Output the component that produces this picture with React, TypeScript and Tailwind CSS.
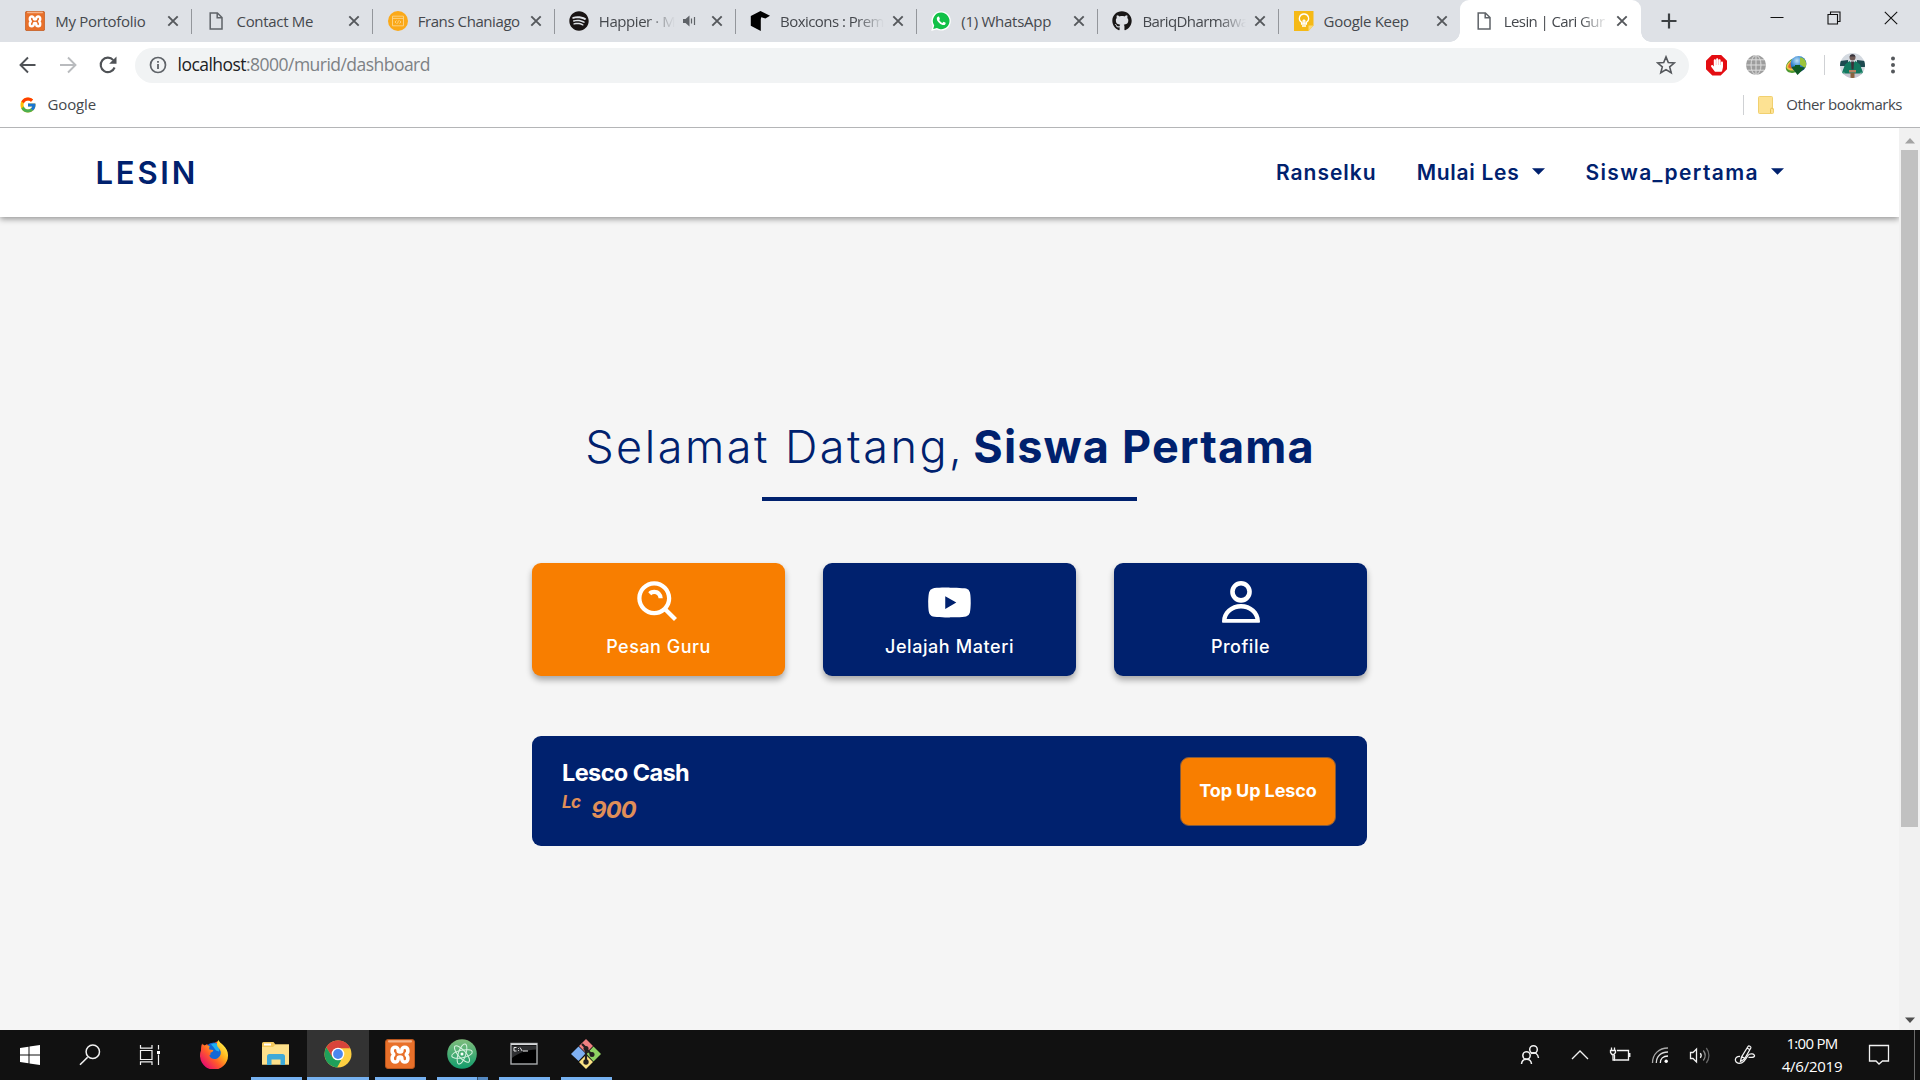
import type { ReactNode } from "react";
import { BiLogoYoutube, BiSearchAlt } from "react-icons/bi";
import { FaGithub, FaSpotify, FaHandPaper } from "react-icons/fa";
import { FcGoogle } from "react-icons/fc";

/* ---------- Brand and favicon drawings ---------- */

function XamppIcon({ className }: { className: string }) {
  return (
    <svg viewBox="0 0 30 30" className={className}>
      <rect x="0.5" y="0.5" width="29" height="29" rx="2.5" fill="#e8702a" stroke="#b9551c" />
      <rect x="3" y="1.2" width="24" height="2.2" rx="1" fill="#f7b48a" />
      <path
        d="M10.2 8.2a3 3 0 0 0-3 3v1.6c0 1.4 1.5 1.6 1.5 2.7S7.2 16.8 7.2 18.600v1.400a3 3 0 0 0 6 0v-.8c0-1.600 3.600-1.600 3.600 0v.8a3 3 0 0 0 6 0v-1.400c0-1.800-1.500-2-1.500-3.100s1.500-1.300 1.500-2.700v-1.600a3 3 0 0 0-6 0v.6c0 1.600-3.600 1.600-3.600 0v-.6a3 3 0 0 0-3-3z"
        fill="none"
        stroke="#fff"
        strokeWidth="3.6"
      />
    </svg>
  );
}

function FileIcon() {
  return (
    <svg viewBox="0 0 20 20" className="size-5">
      <path d="M4.200 1.900h7.200l4.600 4.600v11.600H4.200z M11.200 2v4.700H16" fill="none" stroke="#5f6368" strokeWidth="1.5" />
    </svg>
  );
}

function CodeIcon() {
  return (
    <svg viewBox="0 0 20 20" className="size-5">
      <circle cx="10" cy="10" r="10" fill="#fba919" />
      <path d="M4.500 5.200h11v9.600h-11z M4.500 7.400h11 M8.500 9.500L7 11l1.500 1.500 M11.500 9.500L13 11l-1.500 1.500 M10.500 9.500l-1 3" fill="none" stroke="#fdd58a" strokeWidth="0.9" />
    </svg>
  );
}

function BoxiconsIcon() {
  return (
    <svg viewBox="0 0 20 20" className="size-5">
      <path d="M10.500 0L20 4.800l-4.600 2.600-4.200-1.200-.4 2.300V20L.8 14.800V5z" fill="#000" />
    </svg>
  );
}

function WhatsappIcon() {
  return (
    <svg viewBox="0 0 20 20" className="size-5">
      <path d="M10.200.2a9.700 9.700 0 1 1-4.600 18.300L.2 19.900l1.500-5.200A9.700 9.700 0 0 1 10.200.2z" fill="#fff" />
      <path d="M10.200 1.600a8.300 8.300 0 1 1-4.300 15.400l-3.700 1 1-3.600a8.300 8.300 0 0 1 7-12.800z" fill="#12c148" />
      <path d="M7.500 5.600c.3 0 .5.100.7.500l.7 1.700c.1.300-.5 1-.7 1.200.8 1.500 1.900 2.300 3.200 2.900.3-.1.900-1.100 1.200-1.100l2 1c.2.200-.1 1.500-.7 1.900-2.200 1.500-8-2.400-8.100-6 0-1.100.8-2.100 1.700-2.100z" fill="#fff" />
    </svg>
  );
}

function KeepIcon() {
  return (
    <svg viewBox="0 0 20 20" className="size-5">
      <path d="M0 0h19.500v14.500L14.500 20H0z" fill="#f5b916" />
      <path d="M14.500 20v-5.500h5z" fill="#fbd975" />
      <path d="M10 3a4.400 4.400 0 0 0-2.400 8.200v2h4.800v-2A4.400 4.400 0 0 0 10 3z M8 15h4 M9.200 13V9.500L10 9l.8.500V13" fill="none" stroke="#fff" strokeWidth="1.300" />
    </svg>
  );
}

function CloseIcon() {
  return (
    <svg viewBox="0 0 12 12" className="size-3">
      <path d="M1.300 1.300l9.400 9.400M10.700 1.300l-9.400 9.400" stroke="#55585c" strokeWidth="1.9" />
    </svg>
  );
}

/* ---------- Browser tabs ---------- */

type Tab = { icon: ReactNode; label: string; spacing: string; fade?: boolean; audio?: boolean };

const tabs: Tab[] = [
  { icon: <XamppIcon className="size-5" />, label: "My Portofolio", spacing: "tracking-[-0.3px]" },
  { icon: <FileIcon />, label: "Contact Me", spacing: "tracking-[-0.3px]" },
  { icon: <CodeIcon />, label: "Frans Chaniago", spacing: "tracking-[-0.42px]" },
  { icon: <FaSpotify className="size-5 text-[#191414]" />, label: "Happier · M", spacing: "tracking-[-0.45px]", fade: true, audio: true },
  { icon: <BoxiconsIcon />, label: "Boxicons : Prem", spacing: "tracking-[-0.55px]", fade: true },
  { icon: <WhatsappIcon />, label: "(1) WhatsApp", spacing: "tracking-[-0.27px]" },
  { icon: <FaGithub className="size-5 text-[#191717]" />, label: "BariqDharmawa", spacing: "tracking-[-0.6px]", fade: true },
  { icon: <KeepIcon />, label: "Google Keep", spacing: "tracking-[-0.3px]" },
];

function TabBody({ tab }: { tab: Tab }) {
  return (
    <div className="flex h-full items-center pl-[14.3px]">
      <span className="flex w-5 shrink-0 justify-center">{tab.icon}</span>
      <span
        className={`-mt-px ml-2.5 shrink-0 overflow-hidden text-[15px] leading-6 whitespace-nowrap text-[#45484d] ${tab.spacing} ${
          tab.audio ? "w-[76px]" : "w-[104px]"
        } ${tab.fade ? "[mask-image:linear-gradient(to_right,black_calc(100%-28px),transparent)]" : ""}`}
      >
        {tab.label}
      </span>
      {tab.audio && (
        <svg viewBox="0 0 14 14" className="ml-2 h-3.5 w-3.5 shrink-0">
          <path d="M0 5h2.500L6.500 1.500v11L2.500 9H0z" fill="#5f6368" />
          <path d="M8.500 4.500v5M11.500 3v8" stroke="#5f6368" strokeWidth="1.2" />
        </svg>
      )}
      <span className={`flex shrink-0 ${tab.audio ? "ml-[14px]" : "ml-[8px]"}`}>
        <CloseIcon />
      </span>
    </div>
  );
}

function TabStrip() {
  return (
    <div className="flex h-[42px] bg-[#dee1e6] pl-[11px]">
      {tabs.map((tab, i) => (
        <div key={tab.label} className="flex w-[181.2px] shrink-0 items-center">
          <div className="h-full flex-1">
            <TabBody tab={tab} />
          </div>
          {i < 7 && <div className="h-[25px] w-px bg-[#93969b]" />}
        </div>
      ))}
      <div className="relative -ml-[1px] w-[181px] shrink-0 rounded-t-[9px] bg-white">
        <div className="absolute bottom-0 -left-2.5 size-2.5 bg-[radial-gradient(circle_at_top_left,#dee1e6_9.5px,white_10px)]" />
        <div className="absolute -right-2.5 bottom-0 size-2.5 bg-[radial-gradient(circle_at_top_right,#dee1e6_9.5px,white_10px)]" />
        <TabBody tab={{ icon: <FileIcon />, label: "Lesin | Cari Gur", spacing: "tracking-[-0.6px]", fade: true }} />
      </div>
      <svg viewBox="0 0 16 16" className="mt-[13px] ml-5 size-4 shrink-0">
        <path d="M8 .5v15M.5 8h15" stroke="#3c4043" strokeWidth="2.2" />
      </svg>
      <div className="mt-[11px] ml-auto flex gap-[43px] pr-[22px]">
        <svg viewBox="0 0 14 14" className="size-3.5">
          <path d="M.5 6.500h13" stroke="#111" strokeWidth="1" />
        </svg>
        <svg viewBox="0 0 14 14" className="size-3.5">
          <path d="M1 3.500h9.500V13H1z M3.500 3.500V1H13v9.500h-2.500" fill="none" stroke="#111" strokeWidth="1.100" />
        </svg>
        <svg viewBox="0 0 14 14" className="size-3.5">
          <path d="M.8.8l12.400 12.400M13.200.8L.8 13.200" stroke="#111" strokeWidth="1.100" />
        </svg>
      </div>
    </div>
  );
}

/* ---------- Toolbar ---------- */

function Toolbar() {
  return (
    <div className="flex h-[46px] items-center bg-white">
      <div className="flex w-[135px] shrink-0 items-center pl-[18px]">
        <svg viewBox="0 0 20 20" className="size-5">
          <path d="M17.500 10H3M10 2.500L2.500 10l7.500 7.500" fill="none" stroke="#4f5256" strokeWidth="1.900" />
        </svg>
        <svg viewBox="0 0 20 20" className="ml-5 size-5">
          <path d="M2 10h15M10 2.500l7.500 7.500-7.500 7.500" fill="none" stroke="#b9bbbe" strokeWidth="1.900" />
        </svg>
        <svg viewBox="0 0 20 20" className="ml-5 size-5">
          <path d="M16.600 12.500a7.200 7.200 0 1 1-1.300-7.400" fill="none" stroke="#4f5256" strokeWidth="2.100" />
          <path d="M18.500 1.500v7.300h-7.300z" fill="#4f5256" />
        </svg>
      </div>
      <div className="flex h-[35px] w-[1554px] shrink-0 items-center rounded-full bg-[#f1f3f4] pr-[13px] pl-[13.500px]">
        <svg viewBox="0 0 18 18" className="h-[18px] w-[18px]">
          <circle cx="9" cy="9" r="7.500" fill="none" stroke="#5f6368" strokeWidth="1.700" />
          <path d="M9 8v5M9 5v1.800" stroke="#5f6368" strokeWidth="1.800" />
        </svg>
        <span className="-mt-0.5 ml-[11px] text-[17.5px] tracking-[-0.53px] text-[#7d8185]">
          <span className="text-[#202124]">localhost</span>:8000/murid/dashboard
        </span>
        <svg viewBox="0 0 20 20" className="ml-auto size-5">
          <path d="M10 1.900l2.300 5.600 6 .5-4.600 3.900 1.500 5.900L10 14.600l-5.200 3.200 1.500-5.900L1.700 8l6-.5z" fill="none" stroke="#55585c" strokeWidth="1.600" />
        </svg>
      </div>
      <div className="ml-[17px] flex items-center">
        <div className="flex size-[21px] items-center justify-center bg-[#e40d12] text-white [clip-path:polygon(30%_0,70%_0,100%_30%,100%_70%,70%_100%,30%_100%,0_70%,0_30%)]">
          <FaHandPaper className="h-[14px] w-[12px]" />
        </div>
        <svg viewBox="0 0 20 20" className="ml-[19px] size-5">
          <circle cx="10" cy="10" r="10" fill="#9d9d9d" />
          <path d="M10 0v20M0 10h20M2 4.800h16M2 15.200h16" stroke="#dcdcdc" strokeWidth="1" />
          <ellipse cx="10" cy="10" rx="5" ry="9.600" fill="none" stroke="#dcdcdc" />
        </svg>
        <svg viewBox="0 0 22 20" className="ml-[19px] h-5 w-[22px]">
          <defs>
            <radialGradient id="orb" cx="0.4" cy="0.3" r="0.8">
              <stop offset="0" stopColor="#bfe2f8" />
              <stop offset="0.5" stopColor="#2e82cf" />
              <stop offset="1" stopColor="#10417f" />
            </radialGradient>
          </defs>
          <path d="M7 4C1 7-1 14 2.500 16.500S11 18 13 15z" fill="#4f9a30" />
          <path d="M7 5C2 8 0 12 2.500 14S9 16 12 14z" fill="#f0c545" />
          <path d="M7.500 6C4 8 2 12 4 13s5 1 7 0z" fill="#e0682f" />
          <circle cx="13.500" cy="8.800" r="7.900" fill="url(#orb)" />
          <path d="M15 2.500c3 0 5.500 2 6 5s0 4-1 5.500l-5-3.500z" fill="#9cc43c" />
          <path d="M6.500 12l3.500-.8V10h5l.3 2 4.700.5-7.500 7.500z" fill="#0f5a24" />
        </svg>
        <div className="ml-[17px] h-5 w-px bg-[#cfd1d4]" />
        <svg viewBox="0 0 25 25" className="ml-[15px] size-[25px]">
          <clipPath id="avatar">
            <circle cx="12.500" cy="12.500" r="12.500" />
          </clipPath>
          <g clipPath="url(#avatar)">
            <rect width="25" height="25" fill="#d3d9e0" />
            <path d="M0 8l8-1v6H0zM17 7l8 1v6h-8z" fill="#1d4a50" />
            <path d="M9.500 8l3 3 3-3 4.500 3.500L23.500 21h-22L5 11.500z" fill="#12785f" />
            <path d="M4 18.500L1.500 21h4zM21 18.500l2.500 2.500h-4z" fill="#4aa28a" />
            <circle cx="12.500" cy="4.600" r="3" fill="#6e5a55" />
            <path d="M9.500 3.500a3.100 3.100 0 0 1 6 0z" fill="#35333c" />
            <path d="M11 8.500h3l-.5 8h-2z" fill="#3b3038" />
            <path d="M9 17h7v2.500H9z" fill="#b98263" />
            <path d="M0 20.500h25V25H0z" fill="#c7c4cf" />
            <path d="M10.500 20h4v5h-4z" fill="#8a623f" />
          </g>
        </svg>
        <svg viewBox="0 0 6 20" className="ml-[24.500px] h-5 w-1.5">
          <circle cx="3" cy="3.500" r="2" fill="#55585c" />
          <circle cx="3" cy="10" r="2" fill="#55585c" />
          <circle cx="3" cy="16.500" r="2" fill="#55585c" />
        </svg>
      </div>
    </div>
  );
}

function BookmarksBar() {
  return (
    <div className="flex h-10 items-center border-b border-[#b4b5b7] bg-white pr-[18px] pb-[6px] pl-[19px] text-[15px] text-[#45484d]">
      <FcGoogle className="h-[18px] w-[18px]" />
      <span className="ml-[10.5px] tracking-[-0.15px]">Google</span>
      <div className="ml-auto h-5 w-px bg-[#cfd1d4]" />
      <svg viewBox="0 0 16 18" className="ml-[14px] h-[18px] w-4">
        <path d="M.5 1.500A1 1 0 0 1 1.500.500h12a1 1 0 0 1 1 1V12l1 1v3.500a1 1 0 0 1-1 1h-13a1 1 0 0 1-1-1z" fill="#fde293" stroke="#f1d06f" />
        <path d="M12.500 17v-3.500a1.300 1.300 0 0 1 2.600 0" fill="none" stroke="#e8c255" />
      </svg>
      <span className="ml-3 tracking-[-0.5px]">Other bookmarks</span>
    </div>
  );
}

/* ---------- Web page ---------- */

function Caret() {
  return (
    <svg viewBox="0 0 13 7" className="-mt-0.5 h-[7px] w-[13px]">
      <path d="M0 .3h13L6.500 6.800z" fill="#00216e" />
    </svg>
  );
}

function Navbar() {
  return (
    <nav className="relative flex h-[89px] items-center bg-white pr-[115px] pl-[95.5px] font-['Inter',sans-serif] text-[21px] leading-none font-semibold text-[#00216e] shadow-[0_2px_6px_rgba(0,0,0,0.4)]">
      <span className="text-[31px] tracking-[2.8px]">LESIN</span>
      <span className="ml-auto tracking-[1px]">Ranselku</span>
      <span className="ml-[40px] tracking-[0.7px]">Mulai Les</span>
      <span className="ml-[13px] flex">
        <Caret />
      </span>
      <span className="ml-[40px] tracking-[1.38px]">Siswa_pertama</span>
      <span className="ml-[12px] flex">
        <Caret />
      </span>
    </nav>
  );
}

function UserIcon() {
  return (
    <svg viewBox="0 0 24 24" className="size-[50px]" fill="#fff" fillRule="evenodd">
      <path d="M12 1.900a5.200 5.200 0 1 0 0 10.400 5.200 5.200 0 0 0 0-10.400zm0 2.200a3 3 0 1 1 0 6 3 3 0 0 1 0-6z" />
      <path d="M12 13c-5 0-9.100 3.700-9.100 8.200v.3c0 .3.200.5.500.5h17.200c.3 0 .5-.2.500-.5v-.3c0-4.500-4.100-8.200-9.100-8.200zm0 2.100c3.500 0 6.300 2.200 6.900 5H5.100c.6-2.800 3.400-5 6.900-5z" />
    </svg>
  );
}

function ActionCard({ color, icon, label, spacing }: { color: string; icon: ReactNode; label: string; spacing: string }) {
  return (
    <div className={`flex h-[113px] flex-col items-center rounded-[9px] pt-[14px] text-white shadow-[0_4px_6px_rgba(0,0,0,0.32)] ${color}`}>
      {icon}
      <span className={`mt-2 text-[18px] leading-6 font-medium ${spacing}`}>{label}</span>
    </div>
  );
}

function Dashboard() {
  return (
    <main className="flex flex-1 flex-col items-center bg-[#f5f5f5] pt-[204px] font-['Inter',sans-serif]">
      <h1 className="flex h-[50px] items-center gap-[9px] text-[45px] leading-none whitespace-nowrap text-[#00216e]">
        <span className="font-[360] tracking-[2.5px]">Selamat Datang,</span>
        <span className="-mr-px font-bold tracking-[1.15px]">Siswa Pertama</span>
      </h1>
      <div className="mt-[26px] h-1 w-[375px] bg-[#00216e]" />
      <div className="mt-[62px] grid w-[835px] grid-cols-3 gap-[38px]">
        <ActionCard color="bg-[#f87e00]" icon={<BiSearchAlt className="-ml-px size-[51px] -mb-px" />} label="Pesan Guru" spacing="tracking-[0.5px]" />
        <ActionCard color="bg-[#00216e]" icon={<BiLogoYoutube className="size-[51px] -mb-px" />} label="Jelajah Materi" spacing="tracking-[0.58px]" />
        <ActionCard color="bg-[#00216e]" icon={<UserIcon />} label="Profile" spacing="tracking-[0.5px]" />
      </div>
      <section className="mt-[60px] flex h-[110px] w-[835px] items-center justify-between rounded-[9px] bg-[#00216e] pr-[31px] pl-[30px] font-bold">
        <div>
          <div className="text-[23.5px] leading-[30px] tracking-[-0.6px] text-white">Lesco Cash</div>
          <div className="mt-[7px] flex text-[#e08f58] italic">
            <span className="text-[17px] leading-[14px] tracking-[-0.7px]">Lc</span>
            <span className="ml-[11px] text-[23.5px] leading-[30px] tracking-[-0.8px]">900</span>
          </div>
        </div>
        <button className="h-[69px] w-[156px] rounded-[9px] border border-[#7f5a42] bg-[#f87e00] pb-px text-[18px] tracking-[-0.1px] whitespace-nowrap text-white">
          Top Up Lesco
        </button>
      </section>
    </main>
  );
}

function Scrollbar() {
  return (
    <div className="flex w-[21px] shrink-0 flex-col items-center bg-[#f1f1f1]">
      <div className="flex h-[22px] items-center">
        <svg viewBox="0 0 10 6" className="mb-[-3px] h-1.5 w-2.5">
          <path d="M5 0l5 5.500H0z" fill="#a3a3a3" />
        </svg>
      </div>
      <div className="h-[677px] w-[17px] bg-[#c1c1c1]" />
      <svg viewBox="0 0 10 6" className="mt-auto mb-[7px] h-1.5 w-2.5">
        <path d="M0 .5h10L5 6z" fill="#505050" />
      </svg>
    </div>
  );
}

/* ---------- Taskbar ---------- */

function FirefoxIcon() {
  return (
    <svg viewBox="0 0 30 30" className="size-[30px]">
      <defs>
        <linearGradient id="fox" x1="0.9" y1="0.1" x2="0.15" y2="0.85">
          <stop offset="0" stopColor="#fff44f" />
          <stop offset="0.35" stopColor="#ffb11b" />
          <stop offset="0.65" stopColor="#ff5a2b" />
          <stop offset="1" stopColor="#e8116b" />
        </linearGradient>
      </defs>
      <path d="M2.500 5.500c.8.200 1.500 1 2 2 1-1 2-1.800 3.500-2.500l2 2 8-4.500c3 .5 6 3 7.500 6.500l1 8-3 7-9 3.500-9-3-4-7z" fill="#ff4b37" />
      <circle cx="15" cy="13.500" r="10" fill="#1368d6" />
      <path d="M12 5.500c4-2.500 8-1 9 2l-1 5-3-1-3-4z" fill="#22b2f0" />
      <path d="M19.500 1c1 2.500 2.500 3 4.500 5 3.500 3.500 5 6.500 5 10A14 14 0 1 1 2 11.500C2.300 8.500 3 7 3.500 4.500c.7 1.200 1.300 1.700 2.300 2C8 6 9.500 6.500 10.800 7.700 10 8.500 9.800 9.500 10.500 10.500l3.500.5c.8.700-.5 2-2.500 2.700-.3 1.500.5 2.500-1.300 2.800 1.500 3.500 5 4.300 8 3 3-1.500 4.200-4.700 3.300-7.500-.6-2-2-3-3-4.500-1-2-.7-4.500 1-6.500z" fill="url(#fox)" />
    </svg>
  );
}

function ExplorerIcon() {
  return (
    <svg viewBox="0 0 30 30" className="size-[30px]">
      <path d="M1 4.500a1.500 1.500 0 0 1 1.500-1.500h10l2 2.500h13.500v20H1z" fill="#f4c95d" />
      <path d="M3 4.500h7v2H3z" fill="#fff" />
      <path d="M1 8h11l2.500-2.500H28V25.500H1z" fill="#fde08b" />
      <path d="M6 26V17.500A2.500 2.500 0 0 1 8.500 15h13a2.500 2.500 0 0 1 2.500 2.500V26h-4.500v-5.500h-9V26z" fill="#3ea9d8" />
    </svg>
  );
}

function ChromeIcon() {
  return (
    <svg viewBox="0 0 30 30" className="size-[30px]">
      <circle cx="15" cy="15" r="13.500" fill="#fdcf41" />
      <path d="M3.300 8.300A13.500 13.500 0 0 1 27.200 9.200H15L9 18z" fill="#d8443a" />
      <path d="M3.300 8.300L9.600 18.500l8.500 2.800-4 7.200A13.500 13.500 0 0 1 3.300 8.300z" fill="#1fa05b" />
      <circle cx="15" cy="15" r="6.300" fill="#fff" />
      <circle cx="15" cy="15" r="4.900" fill="#4a87ee" />
    </svg>
  );
}

function AtomIcon() {
  return (
    <svg viewBox="0 0 30 30" className="size-[30px]">
      <defs>
        <linearGradient id="atom" x1="0" y1="0" x2="0" y2="1">
          <stop offset="0" stopColor="#80bd7c" />
          <stop offset="1" stopColor="#129c6c" />
        </linearGradient>
      </defs>
      <circle cx="15" cy="15" r="14.800" fill="url(#atom)" />
      <g fill="none" stroke="#d5f1df" strokeWidth="1">
        <ellipse cx="15" cy="15" rx="10.500" ry="3.800" transform="rotate(-12 15 15)" />
        <ellipse cx="15" cy="15" rx="10.500" ry="3.800" transform="rotate(48 15 15)" />
        <ellipse cx="15" cy="15" rx="10.500" ry="3.800" transform="rotate(108 15 15)" />
      </g>
      <circle cx="15" cy="15" r="1.500" fill="#fff" />
    </svg>
  );
}

function TerminalIcon() {
  return (
    <svg viewBox="0 0 30 30" className="size-[30px]">
      <rect x="2" y="4.500" width="26" height="20.500" fill="#000" stroke="#a9abad" strokeWidth="1.400" />
      <path d="M3 6.500h24v4C18 11 9 14 3 19z" fill="#2e2f31" />
      <path d="M2 4.500h26v1.500H2z" fill="#d7d8da" />
      <path d="M7.500 8.500H5v3.500h2.500M9.500 9v.8M9.500 11.200v.8M11 8.500l2.200 3.500M14 12h5" fill="none" stroke="#e6e6e6" strokeWidth="1" />
    </svg>
  );
}

function GitIcon() {
  return (
    <svg viewBox="0 0 30 30" className="size-[30px]">
      <path d="M15 0l7 7-7 7-7-7z" fill="#f07f80" />
      <path d="M7.500 7.500l7 7-7 7.500L0 15z" fill="#7fb0f2" />
      <path d="M22.500 7.500L30 15l-7.500 7.500-7-7.500z" fill="#8fd163" />
      <path d="M15 16l7 7-7 7-7-7z" fill="#fbe283" />
      <path d="M11 5l4 4v15M15 10l6 5.500" fill="none" stroke="#231f20" strokeWidth="2.200" />
      <circle cx="15" cy="9.500" r="2.500" fill="#231f20" />
      <circle cx="21" cy="15.500" r="2.500" fill="#231f20" />
      <circle cx="15" cy="23" r="2.700" fill="#231f20" />
    </svg>
  );
}

function TaskButton({ children, state }: { children: ReactNode; state?: "open" | "active" | "stacked" }) {
  return (
    <div className={`flex h-full w-[62px] shrink-0 flex-col items-center ${state === "active" ? "bg-[#333333]" : ""}`}>
      <div className="flex h-[47px] items-center pt-[3px] pb-[2px]">{children}</div>
      {state === "open" && <div className="h-[3px] w-[51px] bg-[#76b1f0]" />}
      {state === "active" && <div className="h-[3px] w-full bg-[#76b1f0]" />}
      {state === "stacked" && (
        <div className="flex h-[3px] w-[51px]">
          <div className="flex-1 bg-[#76b1f0]" />
          <div className="w-[11px] border-l border-[#33506b] bg-[#5488c0]" />
        </div>
      )}
    </div>
  );
}

function SystemIcon({ width, children }: { width: string; children: ReactNode }) {
  return (
    <div className={`flex shrink-0 justify-center ${width}`}>
      <svg viewBox="0 0 24 24" className="size-6" fill="none" stroke="#f2f2f2" strokeWidth="1.300">
        {children}
      </svg>
    </div>
  );
}

function Taskbar() {
  return (
    <footer className="flex h-[50px] items-center bg-[#111111] text-white">
      <SystemIcon width="w-[60px]">
        <path d="M2 5l8.500-1.200v7.700H2zM11.500 3.600L22 2v9.500H11.500zM2 12.500h8.500v7.700L2 19zM11.500 12.500H22V22l-10.500-1.500z" fill="#fff" stroke="none" />
      </SystemIcon>
      <SystemIcon width="w-[60px]">
        <path d="M9.600 14.200L2 21.800" strokeWidth="1.600" />
        <circle cx="14.800" cy="8.800" r="6.700" strokeWidth="1.500" />
      </SystemIcon>
      <SystemIcon width="w-[60px]">
        <path d="M2.500 2v3.200h11.500V2M2.500 7.500h11.500v9H2.500zM2.500 22v-3.200h11.500V22M20.500 2v4.500M20.500 11.500V22" strokeWidth="1.200" />
        <path d="M19 8h3v3h-3z" fill="#fff" stroke="none" />
      </SystemIcon>
      <div className="ml-[3px] flex h-full">
        <TaskButton><FirefoxIcon /></TaskButton>
        <TaskButton state="open"><ExplorerIcon /></TaskButton>
        <TaskButton state="active"><ChromeIcon /></TaskButton>
        <TaskButton state="open"><XamppIcon className="size-[30px]" /></TaskButton>
        <TaskButton state="stacked"><AtomIcon /></TaskButton>
        <TaskButton state="open"><TerminalIcon /></TaskButton>
        <TaskButton state="open"><GitIcon /></TaskButton>
      </div>
      <div className="ml-auto flex h-full items-center">
        <SystemIcon width="w-[60px]">
          <circle cx="15.500" cy="6.500" r="3.800" strokeWidth="1.500" />
          <path d="M13 10.500c4-2 7 .5 7.500 4.500" strokeWidth="1.500" />
          <circle cx="8.500" cy="12.500" r="3.700" strokeWidth="1.500" />
          <path d="M3.500 21c.5-6.500 9.500-6.500 10 0" strokeWidth="1.500" />
        </SystemIcon>
        <SystemIcon width="w-10">
          <path d="M4 16l8-8 8 8" />
        </SystemIcon>
        <SystemIcon width="w-10">
          <path d="M9 7.500h11.500v9.500H6.500v-5M21.800 10v4" />
          <path d="M3.500 4.500v3M6.500 4.500v3M2.500 7.500h5v2L6 11.500H4L2.500 9.500zM5 11.500v5.500h2" />
        </SystemIcon>
        <SystemIcon width="w-10">
          <path d="M4.500 20C4.500 11 11 5 20 5" stroke="#a8a8a8" />
          <path d="M8.300 20C8.300 13.500 13 9 20 9" stroke="#dadada" />
          <path d="M12.300 20C12.300 16 15 13 20 13" />
          <circle cx="18.200" cy="18.300" r="1.700" fill="#fff" stroke="none" />
        </SystemIcon>
        <SystemIcon width="w-10">
          <path d="M2.500 9.500h2.500l3.500-3.500v13l-3.500-3.500h-2.500z" />
          <path d="M12.300 10.200c1 1.300 1 3.300 0 4.600" />
          <path d="M15.300 7.500c2.300 3 2.300 7 0 10" stroke="#8a8a8a" />
          <path d="M18.300 5c3.500 4.500 3.500 10.500 0 15" stroke="#666" />
        </SystemIcon>
        <SystemIcon width="w-[50px]">
          <path d="M7.500 18.500l1-4.500L15 3.500c.8-1.200 3.500 0 2.800 1.500L11.500 16z M9 13.800l2.800 1.700 M14 5l3 1.800" />
          <path d="M7 13.500c-6-.5-6 6.500-1 6.800 4 .2 6-3 9-7.800 2-3 7-1.500 6.500.5s-4 1.500-6 1.300" />
        </SystemIcon>
        <div className="flex w-[84px] flex-col items-center text-[15px] leading-[23px]">
          <span className="tracking-[-0.7px]">1:00 PM</span>
          <span className="tracking-[-0.25px]">4/6/2019</span>
        </div>
        <SystemIcon width="w-[50px]">
          <path d="M2.500 2.500h19v15.500h-6L12 21l-3-3H2.500z" />
        </SystemIcon>
        <div className="ml-[10px] h-full w-1.5 border-l border-[#6b6b6b]" />
      </div>
    </footer>
  );
}

export default function App() {
  return (
    <div className="flex h-[1080px] w-[1920px] flex-col overflow-hidden bg-white font-['Open_Sans',sans-serif]">
      <TabStrip />
      <Toolbar />
      <BookmarksBar />
      <div className="flex h-[902px]">
        <div className="flex flex-1 flex-col overflow-hidden">
          <Navbar />
          <Dashboard />
        </div>
        <Scrollbar />
      </div>
      <Taskbar />
    </div>
  );
}
